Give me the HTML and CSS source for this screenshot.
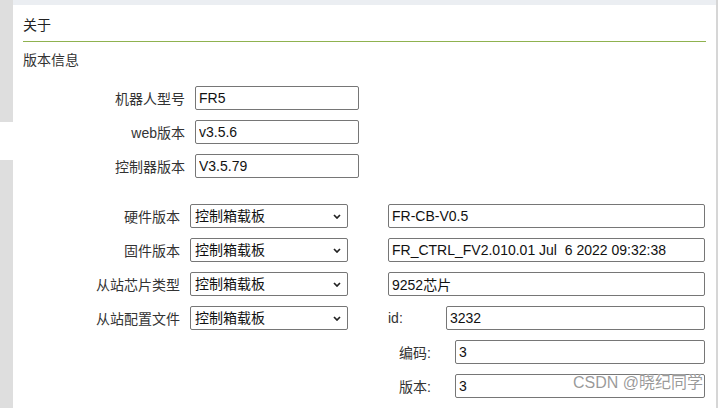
FILE: index.html
```html
<!DOCTYPE html>
<html lang="zh">
<head>
<meta charset="utf-8">
<link rel="stylesheet" href="styles.css">
</head>
<body>
<div class="page">
  <div class="sidebar">
    <div class="side-block top"></div>
    <div class="side-block bottom"></div>
  </div>
  <div class="main">
    <div class="strip"></div>
    <div class="content">
      <div class="title">关于</div>
      <div class="subtitle">版本信息</div>
      <div class="basic">
        <div class="row"><label class="lbl">机器人型号</label><input class="txt w1" value="FR5"></div>
        <div class="row"><label class="lbl">web版本</label><input class="txt w1" value="v3.5.6"></div>
        <div class="row"><label class="lbl">控制器版本</label><input class="txt w1" value="V3.5.79"></div>
      </div>
      <div class="detail">
        <div class="col-left">
          <div class="row"><label class="lbl2">硬件版本</label><div class="selwrap"><select class="sel"><option>控制箱载板</option></select><svg class="chev" width="8" height="5" viewBox="0 0 8 5"><path d="M1 1 L4 4 L7 1" fill="none" stroke="#222" stroke-width="1.7"/></svg></div></div>
          <div class="row"><label class="lbl2">固件版本</label><div class="selwrap"><select class="sel"><option>控制箱载板</option></select><svg class="chev" width="8" height="5" viewBox="0 0 8 5"><path d="M1 1 L4 4 L7 1" fill="none" stroke="#222" stroke-width="1.7"/></svg></div></div>
          <div class="row"><label class="lbl2">从站芯片类型</label><div class="selwrap"><select class="sel"><option>控制箱载板</option></select><svg class="chev" width="8" height="5" viewBox="0 0 8 5"><path d="M1 1 L4 4 L7 1" fill="none" stroke="#222" stroke-width="1.7"/></svg></div></div>
          <div class="row"><label class="lbl2">从站配置文件</label><div class="selwrap"><select class="sel"><option>控制箱载板</option></select><svg class="chev" width="8" height="5" viewBox="0 0 8 5"><path d="M1 1 L4 4 L7 1" fill="none" stroke="#222" stroke-width="1.7"/></svg></div></div>
        </div>
        <div class="col-right">
          <div class="row"><input class="txt wfull" value="FR-CB-V0.5"></div>
          <div class="row"><input class="txt wfull" value="FR_CTRL_FV2.010.01 Jul  6 2022 09:32:38"></div>
          <div class="row"><input class="txt wfull" value="9252芯片"></div>
          <div class="row"><label class="lbl3">id:</label><input class="txt wid" value="3232"></div>
          <div class="row sub"><label class="lbl4">编码:</label><input class="txt wsub" value="3"></div>
          <div class="row sub"><label class="lbl4">版本:</label><input class="txt wsub" value="3"></div>
        </div>
      </div>
    </div>
    <div class="watermark">CSDN @晓纪同学</div>
  </div>
  <div class="edge"></div>
</div>
</body>
</html>
```
FILE: styles.css
```css
html, body {
  margin: 0;
  padding: 0;
  background: #fff;
  width: 719px;
  height: 408px;
  overflow: hidden;
  font-family: "Liberation Sans", "Noto Sans CJK SC", sans-serif;
  color: #333;
}
.page {
  display: flex;
  width: 719px;
  height: 408px;
}
.sidebar {
  width: 13px;
  flex: none;
  display: flex;
  flex-direction: column;
  gap: 38px;
}
.side-block { background: #dedede; }
.side-block.top { height: 122px; }
.side-block.bottom { flex: 1; }
.main {
  width: 703px;
  flex: none;
  position: relative;
  display: flex;
  flex-direction: column;
  overflow: hidden;
}
.strip {
  height: 5px;
  background: #ebeef2;
}
.content {
  padding: 0 10px;
}
.title {
  margin-top: 10px;
  font-size: 14px;
  line-height: 20px;
  padding-bottom: 6px;
  border-bottom: 1px solid #8fb24f;
  color: #222;
}
.subtitle {
  margin-top: 8px;
  font-size: 14px;
  line-height: 20px;
  color: #333;
}
.basic {
  margin-top: 16px;
  display: flex;
  flex-direction: column;
  gap: 10px;
}
.row {
  display: flex;
  align-items: center;
  height: 24px;
}
.lbl {
  width: 162px;
  margin-right: 10px;
  text-align: right;
  font-size: 14px;
  color: #333;
}
.lbl2 {
  width: 157px;
  margin-right: 10px;
  text-align: right;
  font-size: 14px;
  color: #333;
}
.txt {
  box-sizing: border-box;
  height: 24px;
  border: 1px solid #767676;
  border-radius: 2px;
  padding: 1px 3px;
  font-family: "Liberation Sans", "Noto Sans CJK SC", sans-serif;
  font-size: 14px;
  color: #111;
  background: #fff;
  outline: none;
}
.w1 { width: 164px; }
.wfull { width: 317px; }
.wid { width: 259px; }
.wsub { width: 250px; }
.detail {
  margin-top: 26px;
  display: flex;
}
.col-left {
  display: flex;
  flex-direction: column;
  gap: 10px;
  width: 325px;
  flex: none;
}
.selwrap {
  position: relative;
  width: 158px;
  height: 24px;
}
.sel {
  appearance: none;
  -webkit-appearance: none;
  box-sizing: border-box;
  width: 158px;
  height: 24px;
  border: 1px solid #767676;
  border-radius: 2px;
  padding: 0 4px;
  font-family: "Liberation Sans", "Noto Sans CJK SC", sans-serif;
  font-size: 14px;
  color: #111;
  background: #fff;
}
.chev {
  position: absolute;
  right: 7px;
  top: 10px;
  pointer-events: none;
}
.col-right {
  margin-left: 40px;
  width: 317px;
  flex: none;
  display: flex;
  flex-direction: column;
  gap: 10px;
}
.lbl3 {
  width: 58px;
  font-size: 14px;
  color: #333;
}
.row.sub { padding-left: 11px; }
.lbl4 {
  width: 56px;
  font-size: 14px;
  color: #333;
}
.edge {
  width: 2px;
  flex: none;
  background: #d6d6d6;
}
.watermark {
  position: absolute;
  right: 13px;
  top: 373px;
  font-size: 16px;
  line-height: 20px;
  color: rgba(120, 120, 120, 0.75);
  text-shadow: 0 0 2px #fff, 0 0 1px #fff;
  white-space: nowrap;
}
```
